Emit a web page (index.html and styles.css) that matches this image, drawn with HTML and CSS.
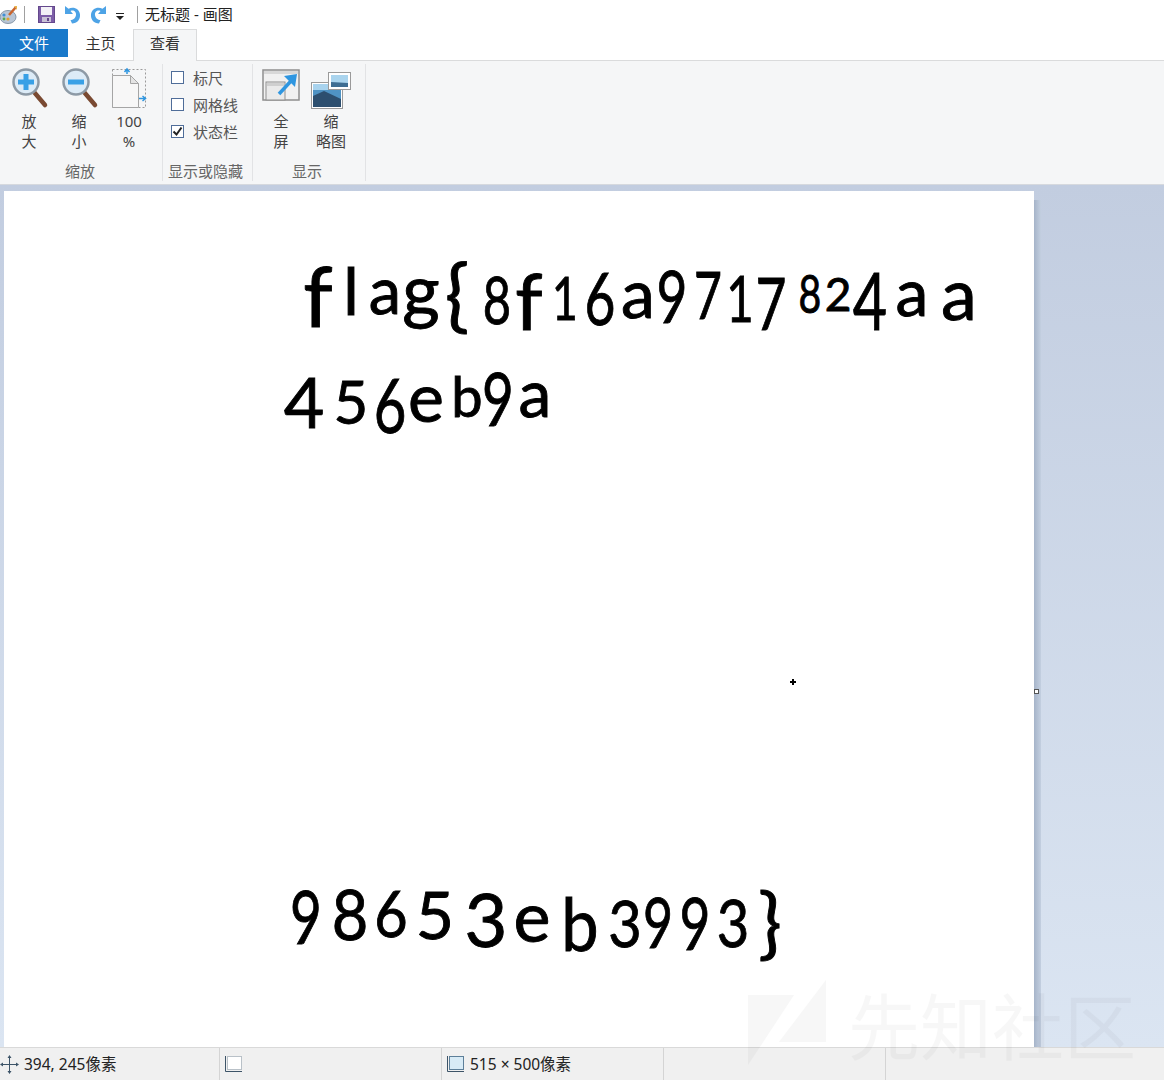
FILE: index.html
```html
<!DOCTYPE html>
<html lang="zh-CN">
<head>
    <meta charset="UTF-8">
    <meta name="viewport" content="width=device-width, initial-scale=1.0">
    <title>无标题 - 画图</title>
    <link rel="stylesheet" href="styles.css">
</head>
<body>
    <div class="window">
        <!-- title bar -->
        <div class="titlebar">
            <svg class="qa-paint" width="18" height="20" viewBox="0 0 18 20">
                <ellipse cx="8" cy="12" rx="8" ry="6.5" fill="#b9c6d6" stroke="#8797a8"/>
                <circle cx="4" cy="10" r="1.6" fill="#3f8fd6"/>
                <circle cx="8" cy="14" r="1.6" fill="#e2a12f"/>
                <circle cx="4" cy="14" r="1.4" fill="#5aa84f"/>
                <path d="M9 10 L16 2" stroke="#c8642e" stroke-width="2.5"/>
                <path d="M14 1 L17 1 L17 5 Z" fill="#e9b44c"/>
            </svg>
            <span class="qa-sep"></span>
            <svg class="qa-save" width="17" height="17" viewBox="0 0 17 17">
                <rect x="0.5" y="0.5" width="16" height="16" fill="#7d5ea8" stroke="#64488c"/>
                <rect x="3" y="1" width="11" height="8" fill="#f3f1f7"/>
                <rect x="4" y="11" width="9" height="5" fill="#c9c2d6"/>
                <rect x="9" y="12" width="2" height="3" fill="#64488c"/>
            </svg>
            <svg class="qa-undo" width="17" height="19" viewBox="0 0 17 19">
                <path d="M1 1 L1 9 L9 9 L6.5 6 C9.5 4.5 12.5 7 12 10 C11.7 13 9 15 6.5 15 L8 18.5 C13 18.5 16.5 14.5 16 9.5 C15.5 4 9.5 1 4.5 3.8 Z" fill="#4da3e6"/>
            </svg>
            <svg class="qa-redo" width="17" height="19" viewBox="0 0 17 19">
                <path d="M16 1 L16 9 L8 9 L10.5 6 C7.5 4.5 4.5 7 5 10 C5.3 13 8 15 10.5 15 L9 18.5 C4 18.5 0.5 14.5 1 9.5 C1.5 4 7.5 1 12.5 3.8 Z" fill="#4da3e6"/>
            </svg>
            <svg class="qa-more" width="8" height="7" viewBox="0 0 8 7">
                <rect x="0" y="0" width="8" height="1" fill="#222"/>
                <path d="M0 3 L8 3 L4 7 Z" fill="#222"/>
            </svg>
            <span class="qa-sep qa-sep-title"></span>
            <span class="title-text">无标题 - 画图</span>
        </div>

        <!-- tabs -->
        <div class="tabs">
            <div class="tab tab-file">文件</div>
            <div class="tab tab-home">主页</div>
            <div class="tab tab-active">查看</div>
        </div>

        <!-- ribbon -->
        <div class="ribbon">
            <div class="group group-zoom">
                <div class="group-body">
                    <div class="big-btn">
                        <svg width="40" height="42" viewBox="0 0 40 42">
                            <path d="M25 25 L36 38" stroke="#7a4a32" stroke-width="4.5" stroke-linecap="round"/>
                            <circle cx="17" cy="15" r="12.5" fill="#dcebf7" stroke="#8d9aa6" stroke-width="2.5"/>
                            <rect x="9" y="12.5" width="16" height="5" fill="#38a0e6"/>
                            <rect x="14.5" y="7" width="5" height="16" fill="#38a0e6"/>
                        </svg>
                        <span class="big-label">放<br>大</span>
                    </div>
                    <div class="big-btn">
                        <svg width="40" height="42" viewBox="0 0 40 42">
                            <path d="M25 25 L36 38" stroke="#7a4a32" stroke-width="4.5" stroke-linecap="round"/>
                            <circle cx="17" cy="15" r="12.5" fill="#dcebf7" stroke="#8d9aa6" stroke-width="2.5"/>
                            <rect x="9" y="12.5" width="16" height="5" fill="#38a0e6"/>
                        </svg>
                        <span class="big-label">缩<br>小</span>
                    </div>
                    <div class="big-btn">
                        <svg width="40" height="42" viewBox="0 0 40 42">
                            <rect x="3.5" y="2.5" width="33" height="38" fill="none" stroke="#9a9a9a" stroke-dasharray="2 2"/>
                            <path d="M3.5 8.5 L21.5 8.5 L29.5 16.5 L29.5 40.5 L3.5 40.5 Z" fill="#f7f7f7" stroke="#a5a5a5"/>
                            <path d="M21.5 8.5 L21.5 16.5 L29.5 16.5 Z" fill="#e4e4e4" stroke="#a5a5a5"/>
                            <path d="M18 7 L18 3 M15.5 5 L18 2 L20.5 5" stroke="#2f96e0" stroke-width="1.5" fill="none"/>
                            <path d="M30 31.5 L36 31.5 M33.5 29 L36.5 31.5 L33.5 34" stroke="#2f96e0" stroke-width="1.5" fill="none"/>
                        </svg>
                        <span class="big-label">100<br>%</span>
                    </div>
                </div>
                <div class="group-name">缩放</div>
            </div>

            <div class="group group-toggle">
                <div class="group-body checks">
                    <label class="check"><span class="box"></span>标尺</label>
                    <label class="check"><span class="box"></span>网格线</label>
                    <label class="check">
                        <span class="box">
                            <svg width="11" height="11" viewBox="0 0 11 11"><path d="M1.5 5.5 L4.5 8.5 L9.5 1.5" fill="none" stroke="#222" stroke-width="2"/></svg>
                        </span>状态栏
                    </label>
                </div>
                <div class="group-name">显示或隐藏</div>
            </div>

            <div class="group group-show">
                <div class="group-body">
                    <div class="big-btn">
                        <svg width="40" height="42" viewBox="0 0 40 42">
                            <rect x="2" y="3" width="36" height="30" fill="#f1f1f1" stroke="#8f8f8f" stroke-width="1.5"/>
                            <rect x="3" y="4" width="34" height="3" fill="#d8d8d8"/>
                            <rect x="5" y="15" width="19" height="18" fill="#eaeaea" stroke="#8f8f8f"/>
                            <rect x="6" y="16" width="17" height="3" fill="#cfcfcf"/>
                            <path d="M18 27 L30 14" stroke="#2f96e0" stroke-width="3.5"/>
                            <path d="M23 9 L36 7 L34 20 Z" fill="#2f96e0"/>
                        </svg>
                        <span class="big-label">全<br>屏</span>
                    </div>
                    <div class="big-btn">
                        <svg width="42" height="42" viewBox="0 0 42 42">
                            <rect x="1.5" y="15.5" width="31" height="26" fill="#fff" stroke="#9a9a9a"/>
                            <rect x="3" y="17" width="28" height="23" fill="#4f93c4"/>
                            <path d="M3 29 L14 24 L31 32 L31 40 L3 40 Z" fill="#2d4f6f"/>
                            <rect x="3" y="17" width="28" height="6" fill="#a8d3ee"/>
                            <rect x="18.5" y="5.5" width="22" height="17" fill="#fff" stroke="#9a9a9a"/>
                            <rect x="21" y="8" width="17" height="12" fill="#a9d4ee"/>
                            <path d="M21 15 L38 16 L38 20 L21 20 Z" fill="#3e6e93"/>
                        </svg>
                        <span class="big-label">缩<br>略图</span>
                    </div>
                </div>
                <div class="group-name">显示</div>
            </div>
        </div>

        <!-- drawing area -->
        <div class="workspace">
            <div class="canvas">
                <div class="hand hand-1"><span>f</span><span>l</span><span>a</span><span>g</span><span>{</span><span>8</span><span>f</span><span>1</span><span>6</span><span>a</span><span>9</span><span>7</span><span>1</span><span>7</span><span>8</span><span>2</span><span>4</span><span>a</span><span>a</span></div>
                <div class="hand hand-2"><span>4</span><span>5</span><span>6</span><span>e</span><span>b</span><span>9</span><span>a</span></div>
                <div class="hand hand-3"><span>9</span><span>8</span><span>6</span><span>5</span><span>3</span><span>e</span><span>b</span><span>3</span><span>9</span><span>9</span><span>3</span><span>}</span></div>
                <span class="cursor-dot"></span>
                <span class="handle"></span>
            </div>
        </div>

        <!-- status bar -->
        <div class="statusbar">
            <div class="cell cell-pos">
                <svg width="19" height="19" viewBox="0 0 19 19">
                    <path d="M9.5 1.5 V17.5 M1.5 9.5 H17.5" stroke="#3d5468" stroke-width="1"/>
                    <path d="M9.5 0 L7.5 3 H11.5 Z M9.5 19 L7.5 16 H11.5 Z M0 9.5 L3 7.5 V11.5 Z M19 9.5 L16 7.5 V11.5 Z" fill="#3d5468"/>
                </svg>
                <span>394, 245像素</span>
            </div>
            <div class="cell cell-sel">
                <svg width="19" height="18" viewBox="0 0 19 18">
                    <rect x="3.5" y="1.5" width="14" height="13" fill="#fff" stroke="#7a8a99" stroke-dasharray="1 1"/>
                    <path d="M1.5 1 V16.5 H18" fill="none" stroke="#3d5468"/>
                </svg>
            </div>
            <div class="cell cell-size">
                <svg width="19" height="18" viewBox="0 0 19 18">
                    <rect x="3.5" y="1.5" width="14" height="13" fill="#d8ebf6" stroke="#5d7f99"/>
                    <path d="M1.5 1 V16.5 H18" fill="none" stroke="#3d5468"/>
                </svg>
                <span>515 × 500像素</span>
            </div>
            <div class="cell cell-empty"></div>
            <div class="cell cell-last"></div>
        </div>

        <!-- site watermark over the shot -->
        <div class="watermark">
            <svg width="80" height="85" viewBox="0 0 80 85">
                <path d="M0 15 L46 15 L0 85 Z M78 0 L78 62 L31 62 Z" fill="#000"/>
            </svg>
            <span>先知社区</span>
        </div>
    </div>
</body>
</html>
```

FILE: styles.css
```css
/* Reset */
html, body {
  margin: 0;
  padding: 0;
}

body {
  font-family: "Noto Sans", "Noto Sans CJK SC", sans-serif;
  font-size: 15px;
  color: #333;
  background-color: #fff;
}

.window {
  position: relative;
  width: 1164px;
  height: 1080px;
  display: flex;
  flex-direction: column;
  overflow: hidden;
}

/* Title bar */
.titlebar {
  height: 29px;
  display: flex;
  align-items: center;
  background-color: #fff;
  flex: none;
}

.qa-sep {
  width: 1px;
  height: 17px;
  background-color: #a0a0a0;
  margin-left: 6px;
}
.qa-save { margin-left: 13px; }
.qa-undo { margin-left: 9px; }
.qa-redo { margin-left: 9px; }
.qa-more { margin-left: 9px; margin-top: 3px; }
.qa-sep-title { margin-left: 13px; }

.title-text {
  margin: 0 0 3px 7px;
  font-size: 15px;
  color: #222;
}

/* Tabs */
.tabs {
  height: 32px;
  display: flex;
  flex: none;
  background-color: #fff;
  border-bottom: 1px solid #dadbdc;
  box-sizing: border-box;
}

.tab {
  height: 28px;
  box-sizing: border-box;
  padding-bottom: 2px;
  display: flex;
  align-items: center;
  justify-content: center;
  font-size: 15px;
  color: #333;
}

.tab-file {
  width: 68px;
  background-color: #1979ca;
  color: #fff;
}

.tab-home { width: 65px; }

.tab-active {
  width: 64px;
  height: 32px;
  padding-bottom: 6px;
  background-color: #f5f6f7;
  border: 1px solid #dadbdc;
  border-bottom: none;
}

/* Ribbon */
.ribbon {
  height: 124px;
  box-sizing: border-box;
  flex: none;
  display: flex;
  padding-top: 3px;
  background-color: #f5f6f7;
  border-bottom: 1px solid #d6d9de;
}

.group {
  display: flex;
  flex-direction: column;
  height: 117px;
  border-right: 1px solid #e2e3e5;
}

.group-zoom { width: 162px; }
.group-toggle { width: 89px; }
.group-show { width: 112px; }

.group-body {
  flex: 1;
  display: flex;
}

.group-zoom .group-body { padding-left: 4px; }
.group-show .group-body { padding-left: 3px; }

.group-name {
  height: 20px;
  line-height: 20px;
  text-align: center;
  font-size: 15px;
  color: #666;
  white-space: nowrap;
  padding-right: 2px;
}

.group-toggle .group-name,
.group-show .group-name { padding-right: 4px; }

.big-btn {
  width: 50px;
  display: flex;
  flex-direction: column;
  align-items: center;
}

.big-btn svg {
  margin-top: 3px;
  flex: none;
}

.big-label {
  margin-top: 2px;
  line-height: 20px;
  text-align: center;
  font-size: 15px;
  color: #444;
}

.checks {
  flex-direction: column;
  padding: 2px 0 0 8px;
  gap: 5px;
}

.check {
  display: flex;
  align-items: center;
  height: 22px;
  font-size: 15px;
  color: #555;
  white-space: nowrap;
}

.box {
  width: 11px;
  height: 11px;
  margin-right: 9px;
  border: 1px solid #4f6d99;
  background-color: #fff;
  display: flex;
  align-items: center;
  justify-content: center;
}

/* Drawing area */
.workspace {
  flex: 1;
  min-height: 0;
  padding: 6px 0 0 4px;
  background: linear-gradient(to bottom, #c2cde0, #dbe5f2);
  display: flex;
}

.canvas {
  position: relative;
  width: 1030px;
  background-color: #fff;
}

.canvas::after {
  content: "";
  position: absolute;
  left: 100%;
  top: 9px;
  bottom: 0;
  width: 7px;
  background: linear-gradient(to right, #a6b4c9, #c3cfe0);
}

/* Handwriting: every glyph sits at its own spot on the canvas.
   --x centre, --b baseline, --s size in window pixels, --w squeeze */
.hand span {
  position: absolute;
  left: calc((var(--x) - 4) * 1px);
  top: calc((var(--b) - 191 - var(--s) * 0.887) * 1px);
  transform: translateX(-50%) scaleX(var(--w, 1));
  font-family: "Lato", sans-serif;
  font-size: calc(var(--s) * 1px);
  line-height: 1;
  color: #000;
  -webkit-text-stroke: 0.9px #000;
}

.hand-1 span:nth-child(1) { --x: 318; --b: 328; --s: 84; }
.hand-1 span:nth-child(2) { --x: 351; --b: 316; --s: 66; }
.hand-1 span:nth-child(3) { --x: 385; --b: 315; --s: 65; }
.hand-1 span:nth-child(4) { --x: 421; --b: 316; --s: 72; }
.hand-1 span:nth-child(5) { --x: 457; --b: 322; --s: 80; }
.hand-1 span:nth-child(6) { --x: 497; --b: 325; --s: 66; --w: 0.74; }
.hand-1 span:nth-child(7) { --x: 529; --b: 330; --s: 78; }
.hand-1 span:nth-child(8) { --x: 565; --b: 320; --s: 60; --w: 0.74; }
.hand-1 span:nth-child(9) { --x: 600; --b: 325; --s: 72; --w: 0.74; }
.hand-1 span:nth-child(10) { --x: 638; --b: 318; --s: 68; }
.hand-1 span:nth-child(11) { --x: 672; --b: 323; --s: 72; --w: 0.74; }
.hand-1 span:nth-child(12) { --x: 708; --b: 320; --s: 65; --w: 0.74; }
.hand-1 span:nth-child(13) { --x: 740; --b: 323; --s: 64; --w: 0.74; }
.hand-1 span:nth-child(14) { --x: 771; --b: 330; --s: 72; --w: 0.74; }
.hand-1 span:nth-child(15) { --x: 810; --b: 313; --s: 53; --w: 0.74; }
.hand-1 span:nth-child(16) { --x: 838; --b: 312; --s: 46; }
.hand-1 span:nth-child(17) { --x: 870; --b: 330; --s: 80; --w: 0.74; }
.hand-1 span:nth-child(18) { --x: 912; --b: 317; --s: 66; }
.hand-1 span:nth-child(19) { --x: 959; --b: 320; --s: 72; }

.hand-2 span:nth-child(1) { --x: 304; --b: 428; --s: 70; }
.hand-2 span:nth-child(2) { --x: 351; --b: 424; --s: 60; }
.hand-2 span:nth-child(3) { --x: 390; --b: 433; --s: 76; --w: 0.74; }
.hand-2 span:nth-child(4) { --x: 426; --b: 422; --s: 68; }
.hand-2 span:nth-child(5) { --x: 467; --b: 418; --s: 56; }
.hand-2 span:nth-child(6) { --x: 498; --b: 427; --s: 74; --w: 0.74; }
.hand-2 span:nth-child(7) { --x: 535; --b: 418; --s: 66; }

.hand-3 span:nth-child(1) { --x: 306; --b: 945; --s: 74; --w: 0.74; }
.hand-3 span:nth-child(2) { --x: 350; --b: 940; --s: 70; --w: 0.9; }
.hand-3 span:nth-child(3) { --x: 391; --b: 938; --s: 64; --w: 0.9; }
.hand-3 span:nth-child(4) { --x: 435; --b: 940; --s: 66; }
.hand-3 span:nth-child(5) { --x: 486; --b: 948; --s: 74; }
.hand-3 span:nth-child(6) { --x: 532; --b: 942; --s: 70; }
.hand-3 span:nth-child(7) { --x: 580; --b: 952; --s: 74; --w: 0.9; }
.hand-3 span:nth-child(8) { --x: 625; --b: 948; --s: 64; --w: 0.9; }
.hand-3 span:nth-child(9) { --x: 658; --b: 948; --s: 70; --w: 0.74; }
.hand-3 span:nth-child(10) { --x: 695; --b: 950; --s: 72; --w: 0.74; }
.hand-3 span:nth-child(11) { --x: 733; --b: 948; --s: 66; --w: 0.85; }
.hand-3 span:nth-child(12) { --x: 770; --b: 950; --s: 78; }

.cursor-dot {
  position: absolute;
  left: 786px;
  top: 490px;
  width: 6px;
  height: 2px;
  background-color: #000;
}

.cursor-dot::after {
  content: "";
  position: absolute;
  left: 2px;
  top: -2px;
  width: 2px;
  height: 6px;
  background-color: #000;
}

.handle {
  position: absolute;
  left: 100%;
  top: 498px;
  width: 3px;
  height: 3px;
  border: 1px solid #555;
  background-color: #fff;
  z-index: 1;
}

/* Status bar */
.statusbar {
  height: 33px;
  flex: none;
  box-sizing: border-box;
  display: flex;
  background-color: #f0f0f0;
  border-top: 1px solid #d9d9d9;
  font-size: 15.5px;
  color: #222;
}

.cell {
  width: 222px;
  display: flex;
  align-items: center;
  gap: 5px;
  box-sizing: border-box;
  border-right: 1px solid #d4d4d4;
}

.cell span { margin-bottom: 1px; }
.cell-pos { width: 220px; }
.cell-sel, .cell-size { padding-left: 4px; }
.cell-last { border-right: none; }

/* Watermark */
.watermark {
  position: absolute;
  left: 748px;
  top: 980px;
  display: flex;
  opacity: 0.028;
  pointer-events: none;
}

.watermark span {
  margin-left: 20px;
  font-family: "Noto Sans CJK SC", sans-serif;
  font-size: 72px;
  line-height: 85px;
  color: #000;
  white-space: nowrap;
}
```
